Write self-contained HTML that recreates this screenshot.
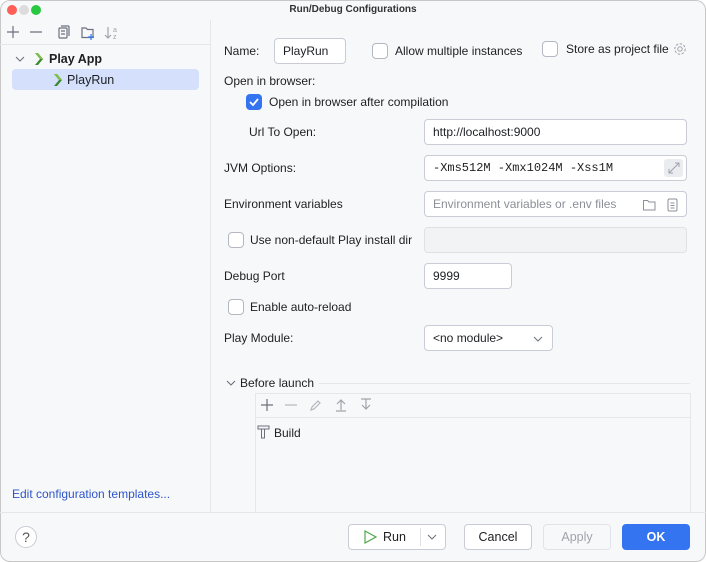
<!DOCTYPE html>
<html><head><style>
*{box-sizing:border-box;margin:0;padding:0}
body{width:706px;height:562px;background:#fff;font-family:"Liberation Sans",sans-serif;font-size:12px;color:#1e1f22;position:relative;overflow:hidden}
.win{position:absolute;left:0;top:0;width:706px;height:562px;background:#f7f8fa;border-radius:10px;overflow:hidden;box-shadow:inset 0 0 0 1px #c8c8c8}
.a{position:absolute;white-space:nowrap}
.tb{position:absolute;left:0;top:0;width:706px;height:20px;text-align:center;font-size:10px;line-height:20px;font-weight:bold;color:#333}
.dot{position:absolute;top:5px;width:10px;height:10px;border-radius:50%}
.inp{position:absolute;background:#fff;border:1px solid #c9ccd6;border-radius:4px;height:26px;line-height:24px;padding-left:8px;font-size:12px}
.cb{position:absolute;width:16px;height:16px;border:1px solid #b5b8c2;border-radius:4px;background:#fff}
.btn{position:absolute;height:26px;border:1px solid #c9ccd6;border-radius:4px;background:#fff;text-align:center;line-height:24px;font-size:12.5px}
.mono{font-family:"Liberation Mono",monospace;font-size:12px}
</style></head><body>
<div class="win">
<div class="tb">Run/Debug Configurations</div>
<div class="dot" style="left:7px;background:#fe5f57"></div>
<div class="dot" style="left:19px;background:#dcdcdc"></div>
<div class="dot" style="left:31px;background:#28c840"></div>
<!-- left panel -->
<div class="a" style="left:210px;top:20px;width:1px;height:492px;background:#e6e7ea"></div>
<div class="a" style="left:0;top:44px;width:210px;height:1px;background:#e6e7ea"></div>
<svg class="a" style="left:6px;top:24px" width="150" height="18" fill="none" stroke="#6c707e" stroke-width="1.2">
<path d="M1 8h12M7 2v12"/><path d="M24 8h12"/>
<rect x="53" y="4" width="8" height="10" rx="1"/><path d="M55 2h7a1 1 0 011 1v9"/><path d="M55 7h4M55 10h4"/>
<path d="M76 4h4l1.5 1.5H87v8H76z"/><path d="M85 10v6M82 13h6" stroke="#3574f0"/>
<path d="M102 3v11M99 11l3 3 3-3" stroke="#a0a3ab"/><text x="107" y="8" font-size="7" fill="#a0a3ab" stroke="none">a</text><text x="107" y="15" font-size="7" fill="#a0a3ab" stroke="none">z</text>
</svg>
<svg class="a" style="left:15px;top:55px" width="10" height="8" fill="none" stroke="#6c707e" stroke-width="1.1"><path d="M1 2l4 4 4-4"/></svg>
<svg class="a" style="left:34px;top:52px" width="10" height="14"><path d="M1 1l3 0 5 6-5 6H1l5-6z" fill="#3c8a2e"/><path d="M1 1l3 0 5 6H6z" fill="#7fc04a"/></svg>
<div class="a" style="left:49px;top:52px;font-weight:bold;font-size:12.5px">Play App</div>
<div class="a" style="left:12px;top:69px;width:187px;height:21px;background:#d5e1fc;border-radius:4px"></div>
<svg class="a" style="left:53px;top:73px" width="10" height="14"><path d="M1 1l3 0 5 6-5 6H1l5-6z" fill="#3c8a2e"/><path d="M1 1l3 0 5 6H6z" fill="#7fc04a"/></svg>
<div class="a" style="left:67px;top:73px;font-size:12.5px">PlayRun</div>
<div class="a" style="left:12px;top:487px;color:#2e55c9;font-size:12px">Edit configuration templates...</div>
<div class="a" style="left:0;top:512px;width:706px;height:1px;background:#e6e7ea"></div>
<div class="a" style="left:15px;top:526px;width:22px;height:22px;border:1px solid #c9ccd6;border-radius:50%;background:#fff;text-align:center;line-height:20px;font-size:14px;color:#555">?</div>
<!-- right -->
<div class="a" style="left:224px;top:44px">Name:</div>
<div class="inp" style="left:274px;top:38px;width:72px">PlayRun</div>
<div class="cb" style="left:372px;top:43px"></div>
<div class="a" style="left:395px;top:44px">Allow multiple instances</div>
<div class="cb" style="left:542px;top:41px"></div>
<div class="a" style="left:566px;top:42px">Store as project file</div>
<svg class="a" style="left:673px;top:41px" width="16" height="16" fill="none" stroke="#a0a3ab" stroke-width="1"><circle cx="7" cy="8" r="2.2"/><circle cx="7" cy="8" r="5.2" stroke-dasharray="2.5 1.5"/></svg>
<div class="a" style="left:224px;top:74px">Open in browser:</div>
<div class="a" style="left:246px;top:94px;width:16px;height:16px;background:#3574f0;border-radius:4px"></div>
<svg class="a" style="left:246px;top:94px" width="16" height="16" fill="none" stroke="#fff" stroke-width="1.8"><path d="M4 8l3 3 5-6"/></svg>
<div class="a" style="left:269px;top:95px">Open in browser after compilation</div>
<div class="a" style="left:249px;top:125px">Url To Open:</div>
<div class="inp" style="left:424px;top:119px;width:263px">http://localhost:9000</div>
<div class="a" style="left:224px;top:161px">JVM Options:</div>
<div class="inp mono" style="left:424px;top:155px;width:263px">-Xms512M -Xmx1024M -Xss1M</div>
<div class="a" style="left:664px;top:159px;width:19px;height:18px;background:#ebecf0;border-radius:3px"></div>
<svg class="a" style="left:666px;top:160px" width="16" height="16" fill="none" stroke="#a0a3ab" stroke-width="1"><path d="M3 13l10-10M9 3h4v4M3 9v4h4"/></svg>
<div class="a" style="left:224px;top:197px">Environment variables</div>
<div class="inp" style="left:424px;top:191px;width:263px;color:#8c8f98">Environment variables or .env files</div>
<svg class="a" style="left:642px;top:197px" width="40" height="16" fill="none" stroke="#8c8f98" stroke-width="1"><path d="M1.5 3.5h4l1.5 1.5h6v8h-11.5z"/><rect x="26" y="2" width="9" height="12" rx="1.5"/><path d="M28.5 6h4M28.5 8.5h4M28.5 11h4"/></svg>
<div class="cb" style="left:228px;top:232px"></div>
<div class="a" style="left:250px;top:233px">Use non-default Play install dir</div>
<div class="inp" style="left:424px;top:227px;width:263px;background:#f2f3f5;border-color:#dfe1e5"></div>
<div class="a" style="left:224px;top:269px">Debug Port</div>
<div class="inp" style="left:424px;top:263px;width:88px">9999</div>
<div class="cb" style="left:228px;top:299px"></div>
<div class="a" style="left:250px;top:300px">Enable auto-reload</div>
<div class="a" style="left:224px;top:331px">Play Module:</div>
<div class="inp" style="left:424px;top:325px;width:129px">&lt;no module&gt;</div>
<svg class="a" style="left:533px;top:335px" width="10" height="8" fill="none" stroke="#6c707e" stroke-width="1"><path d="M1 2l4 4 4-4"/></svg>
<svg class="a" style="left:226px;top:379px" width="10" height="8" fill="none" stroke="#6c707e" stroke-width="1.1"><path d="M1 2l4 4 4-4"/></svg>
<div class="a" style="left:240px;top:376px">Before launch</div>
<div class="a" style="left:319px;top:383px;width:371px;height:1px;background:#e6e7ea"></div>
<div class="a" style="left:255px;top:393px;width:436px;height:120px;border:1px solid #e6e7ea;background:#f7f8fa"></div>
<div class="a" style="left:255px;top:417px;width:436px;height:1px;background:#e6e7ea"></div>
<svg class="a" style="left:258px;top:397px" width="120" height="17" fill="none" stroke-width="1.2">
<path d="M3 8h12M9 2v12" stroke="#6c707e"/><path d="M27 8h12" stroke="#b4b7be"/>
<path d="M53 13l1-3 6-6 2 2-6 6z" stroke="#b4b7be"/>
<path d="M83 3v10M79 7l4-4 4 4M78 14h10" stroke="#a0a3ab"/>
<path d="M108 2v10M104 8l4 4 4-4M103 2h10" stroke="#a0a3ab"/>
</svg>
<svg class="a" style="left:256px;top:424px" width="16" height="16" fill="none" stroke="#6c707e" stroke-width="1"><path d="M2 2h11v3H2zM5.5 5v9h3V5"/></svg>
<div class="a" style="left:274px;top:426px">Build</div>
<!-- buttons -->
<div class="btn" style="left:348px;top:524px;width:98px"></div>
<svg class="a" style="left:362px;top:529px" width="16" height="16" fill="none" stroke="#4fa84a" stroke-width="1.2"><path d="M3 2l11 6-11 6z"/></svg>
<div class="a" style="left:383px;top:530px;font-size:12.5px">Run</div>
<div class="a" style="left:420px;top:528px;width:1px;height:18px;background:#dfe1e5"></div>
<svg class="a" style="left:427px;top:533px" width="10" height="8" fill="none" stroke="#6c707e" stroke-width="1"><path d="M1 2l4 4 4-4"/></svg>
<div class="btn" style="left:464px;top:524px;width:68px">Cancel</div>
<div class="btn" style="left:543px;top:524px;width:68px;color:#a0a3ab;border-color:#e1e3e8;background:#f7f8fa">Apply</div>
<div class="btn" style="left:622px;top:524px;width:68px;background:#3574f0;border-color:#3574f0;color:#fff;font-weight:bold">OK</div>
</div>
</body></html>
